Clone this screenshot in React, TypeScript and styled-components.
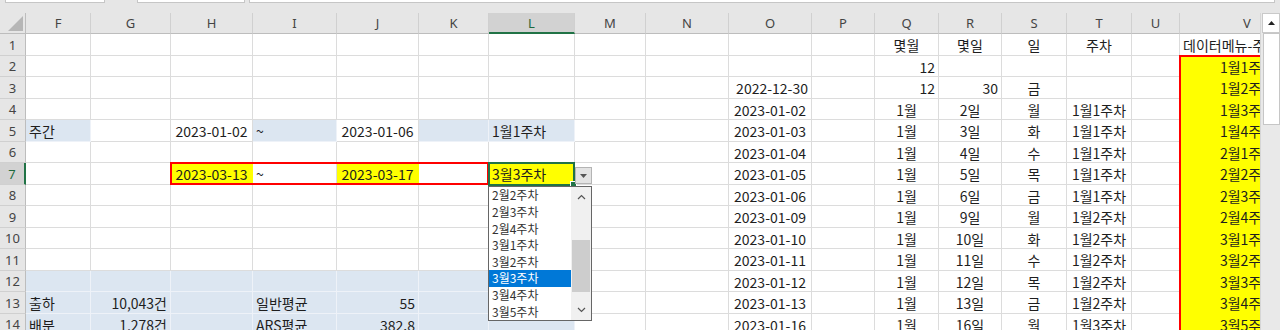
import React from 'react';
import styled, { createGlobalStyle } from 'styled-components';

type Fill = 'none' | 'blue' | 'yellow';
type Align = 'left' | 'center' | 'right';
interface CellDef { t?: string; a?: Align; f?: Fill }

const GlobalStyle = createGlobalStyle`
  html, body { margin: 0; padding: 0; background: #e6e6e6; overflow: hidden; }
  body { font-family: "Noto Sans CJK KR", "Noto Sans", sans-serif; }
`;

const COLS = ['F','G','H','I','J','K','L','M','N','O','P','Q','R','S','T','U','V'];
const WIDTHS = [65,80,82,84,82,70,86,71,83,83,63,64,63,65,65,48,135];
const ROW_H = [22,21,22,21,22,21,22,21,22,21,22,21,22,21];
const ACTIVE_COL = 'L';
const ACTIVE_ROW = 7;

const cells: Record<string, CellDef> = {
  F5: { t: '주간', f: 'blue' },
  H5: { t: '2023-01-02', a: 'center' },
  I5: { t: '~', f: 'blue' },
  J5: { t: '2023-01-06', a: 'center' },
  K5: { f: 'blue' },
  L5: { t: '1월1주차', f: 'blue' },
  H7: { t: '2023-03-13', a: 'center', f: 'yellow' },
  I7: { t: '~' },
  J7: { t: '2023-03-17', a: 'center', f: 'yellow' },
  L7: { t: '3월3주차', f: 'yellow' },
  F13: { t: '출하', f: 'blue' },
  G13: { t: '10,043건', a: 'right', f: 'blue' },
  I13: { t: '일반평균', f: 'blue' },
  J13: { t: '55', a: 'right', f: 'blue' },
  F14: { t: '배분', f: 'blue' },
  G14: { t: '1,278건', a: 'right', f: 'blue' },
  I14: { t: 'ARS평균', f: 'blue' },
  J14: { t: '382.8', a: 'right', f: 'blue' },
  Q1: { t: '몇월', a: 'center' },
  R1: { t: '몇일', a: 'center' },
  S1: { t: '일', a: 'center' },
  T1: { t: '주차', a: 'center' },
  V1: { t: '데이터메뉴-주차', a: 'left' },
  Q2: { t: '12', a: 'right' },
  O3: { t: '2022-12-30', a: 'right' },
  Q3: { t: '12', a: 'right' },
  R3: { t: '30', a: 'right' },
  S3: { t: '금', a: 'center' },
};

// blue band rows 12-14, F..L
for (let r = 12; r <= 14; r++) {
  ['F','G','H','I','J','K','L'].forEach((c) => {
    const k = `${c}${r}`;
    cells[k] = { ...(cells[k] || {}), f: 'blue' };
  });
}

const dayRows: [string, string, string, string][] = [
  ['2023-01-02', '2일', '월', '1월1주차'],
  ['2023-01-03', '3일', '화', '1월1주차'],
  ['2023-01-04', '4일', '수', '1월1주차'],
  ['2023-01-05', '5일', '목', '1월1주차'],
  ['2023-01-06', '6일', '금', '1월1주차'],
  ['2023-01-09', '9일', '월', '1월2주차'],
  ['2023-01-10', '10일', '화', '1월2주차'],
  ['2023-01-11', '11일', '수', '1월2주차'],
  ['2023-01-12', '12일', '목', '1월2주차'],
  ['2023-01-13', '13일', '금', '1월2주차'],
  ['2023-01-16', '16일', '월', '1월3주차'],
];
dayRows.forEach(([d, day, wd, wk], i) => {
  const r = i + 4;
  cells[`O${r}`] = { t: d, a: 'center' };
  cells[`Q${r}`] = { t: '1월', a: 'center' };
  cells[`R${r}`] = { t: day, a: 'center' };
  cells[`S${r}`] = { t: wd, a: 'center' };
  cells[`T${r}`] = { t: wk, a: 'center' };
});

const weekList = ['1월1주차','1월2주차','1월3주차','1월4주차','2월1주차','2월2주차','2월3주차','2월4주차','3월1주차','3월2주차','3월3주차','3월4주차','3월5주차'];
weekList.forEach((w, i) => {
  cells[`V${i + 2}`] = { t: w, a: 'center', f: 'yellow' };
});

const listItems = ['2월2주차','2월3주차','2월4주차','3월1주차','3월2주차','3월3주차','3월4주차','3월5주차'];
const SELECTED = '3월3주차';

const fillColor = (f?: Fill) => (f === 'blue' ? '#dce6f1' : f === 'yellow' ? '#ffff00' : '#ffffff');
const lineColor = (f?: Fill) => (f === 'blue' ? '#eef2f8' : f === 'yellow' ? '#ffff00' : '#dcdcdc');

const Page = styled.div`
  width: 1280px;
  height: 330px;
  display: flex;
  flex-direction: column;
  background: #e6e6e6;
  overflow: hidden;
`;

const TopStrip = styled.div`
  height: 13px;
  flex: none;
  display: flex;
  align-items: flex-start;
  padding-left: 5px;
  gap: 0;
`;

const FieldStub = styled.div<{ $w: number; $ml: number }>`
  width: ${(p) => p.$w}px;
  margin-left: ${(p) => p.$ml}px;
  height: 2px;
  background: #ffffff;
  border: 1px solid #c6c6c6;
  border-top: none;
`;

const Workspace = styled.div`
  flex: 1;
  display: flex;
  min-height: 0;
`;

const SheetViewport = styled.div`
  position: relative;
  width: 1260px;
  flex: none;
  overflow: hidden;
  background: #ffffff;
`;

const SheetGrid = styled.div`
  display: grid;
  grid-template-columns: 26px ${WIDTHS.map((w) => `${w}px`).join(' ')};
  grid-template-rows: 21px ${ROW_H.map((h) => `${h}px`).join(' ')};
  width: max-content;
`;

const Corner = styled.div`
  grid-row: 1;
  grid-column: 1;
  background: #e6e6e6;
  border-right: 1px solid #bdbdbd;
  border-bottom: 1px solid #bdbdbd;
  position: relative;
  &::after {
    content: '';
    position: absolute;
    right: 2px;
    bottom: 2px;
    width: 15px;
    height: 15px;
    background: #b6b6b6;
    clip-path: polygon(100% 0, 100% 100%, 0 100%);
  }
`;

const ColHead = styled.div<{ $c: number; $active: boolean }>`
  grid-row: 1;
  grid-column: ${(p) => p.$c};
  display: flex;
  align-items: center;
  justify-content: center;
  font-family: "Noto Sans", "Open Sans", sans-serif;
  font-size: 13px;
  color: ${(p) => (p.$active ? '#1d6a3e' : '#444444')};
  background: ${(p) => (p.$active ? '#d2d2d2' : '#e6e6e6')};
  border-right: 1px solid #d0d0d0;
  border-bottom: ${(p) => (p.$active ? '2px solid #217346' : '1px solid #bdbdbd')};
  padding-top: ${(p) => (p.$active ? '1px' : '0')};
`;

const RowHead = styled.div<{ $r: number; $active: boolean }>`
  grid-row: ${(p) => p.$r};
  grid-column: 1;
  display: flex;
  align-items: center;
  justify-content: center;
  font-family: "Noto Sans", "Open Sans", sans-serif;
  font-size: 13px;
  color: ${(p) => (p.$active ? '#1d6a3e' : '#444444')};
  background: ${(p) => (p.$active ? '#d2d2d2' : '#e6e6e6')};
  border-bottom: 1px solid #d0d0d0;
  border-right: ${(p) => (p.$active ? '2px solid #217346' : '1px solid #bdbdbd')};
`;

const Cell = styled.div<{ $r: number; $c: number; $fill?: Fill; $align?: Align }>`
  grid-row: ${(p) => p.$r};
  grid-column: ${(p) => p.$c};
  min-width: 0;
  display: flex;
  align-items: center;
  justify-content: ${(p) => (p.$align === 'right' ? 'flex-end' : p.$align === 'center' ? 'center' : 'flex-start')};
  padding: 1px 3px 0 3px;
  background: ${(p) => fillColor(p.$fill)};
  border-right: 1px solid ${(p) => lineColor(p.$fill)};
  border-bottom: 1px solid ${(p) => lineColor(p.$fill)};
  font-size: 14px;
  line-height: 1;
  color: #1e1e1e;
  white-space: nowrap;
`;

const RangeOutline = styled.div<{ $rows: string; $cols: string }>`
  grid-row: ${(p) => p.$rows};
  grid-column: ${(p) => p.$cols};
  border: 2px solid #ff0000;
  margin: -1px 0 0 -1px;
  pointer-events: none;
  z-index: 2;
`;

const ActiveCell = styled.div<{ $r: number; $c: number }>`
  grid-row: ${(p) => p.$r};
  grid-column: ${(p) => p.$c};
  border: 2px solid #217346;
  margin: -1px 0 -1px -1px;
  position: relative;
  z-index: 3;
  &::after {
    content: '';
    position: absolute;
    right: -4px;
    bottom: -4px;
    width: 5px;
    height: 5px;
    background: #217346;
    border: 1px solid #ffffff;
  }
`;

const DropButton = styled.div`
  position: absolute;
  left: 575px;
  top: 154px;
  width: 17px;
  height: 17px;
  box-sizing: border-box;
  background: #e3e3e3;
  border: 1px solid #b4b4b4;
  display: flex;
  align-items: center;
  justify-content: center;
  z-index: 4;
`;

const DropList = styled.div`
  position: absolute;
  left: 488px;
  top: 173px;
  width: 104px;
  height: 135px;
  box-sizing: border-box;
  border: 1px solid #666666;
  background: #ffffff;
  display: flex;
  z-index: 5;
`;

const ListItems = styled.div`
  flex: 1;
  display: flex;
  flex-direction: column;
`;

const ListItem = styled.div<{ $sel: boolean }>`
  height: 16.65px;
  display: flex;
  align-items: center;
  padding-left: 3px;
  font-size: 12px;
  line-height: 1;
  color: ${(p) => (p.$sel ? '#ffffff' : '#333333')};
  background: ${(p) => (p.$sel ? '#0078d7' : 'transparent')};
`;

const ListScroll = styled.div`
  width: 20px;
  flex: none;
  background: #f0f0f0;
  display: flex;
  flex-direction: column;
  align-items: center;
`;

const ListArrow = styled.div`
  height: 20px;
  width: 100%;
  flex: none;
  display: flex;
  align-items: center;
  justify-content: center;
`;

const ListTrack = styled.div`
  flex: 1;
  width: 100%;
  display: flex;
  flex-direction: column;
  align-items: center;
`;

const ListThumb = styled.div`
  margin-top: 33px;
  width: 18px;
  height: 52px;
  background: #cdcdcd;
`;

const VScroll = styled.div`
  width: 20px;
  flex: none;
  background: #e9e9e9;
  border-left: 1px solid #d6d6d6;
  box-sizing: border-box;
  display: flex;
  flex-direction: column;
  align-items: center;
  padding-left: 1px;
`;

const ScrollBtn = styled.div`
  width: 18px;
  height: 20px;
  box-sizing: border-box;
  background: #ffffff;
  border: 1px solid #c9c9c9;
  display: flex;
  align-items: center;
  justify-content: center;
`;

const ScrollThumb = styled.div`
  width: 17px;
  height: 92px;
  box-sizing: border-box;
  background: #ffffff;
  border: 1px solid #c6c6c6;
`;

const Chevron: React.FC<{ up?: boolean }> = ({ up }) => (
  <svg width="9" height="6" viewBox="0 0 9 6">
    <polyline
      points={up ? '1,5 4.5,1.5 8,5' : '1,1 4.5,4.5 8,1'}
      fill="none"
      stroke="#555"
      strokeWidth="1.2"
    />
  </svg>
);

const App: React.FC = () => {
  const rows = ROW_H.map((_, i) => i + 1);
  return (
    <>
      <GlobalStyle />
      <Page>
        <TopStrip>
          <FieldStub $w={98} $ml={0} />
          <FieldStub $w={106} $ml={32} />
          <FieldStub $w={1024} $ml={4} />
        </TopStrip>
        <Workspace>
          <SheetViewport>
            <SheetGrid>
              <Corner />
              {COLS.map((c, i) => (
                <ColHead key={c} $c={i + 2} $active={c === ACTIVE_COL}>{c}</ColHead>
              ))}
              {rows.map((r) => (
                <React.Fragment key={r}>
                  <RowHead $r={r + 1} $active={r === ACTIVE_ROW}>{r}</RowHead>
                  {COLS.map((c, i) => {
                    const def = cells[`${c}${r}`] || {};
                    return (
                      <Cell key={c} $r={r + 1} $c={i + 2} $fill={def.f} $align={def.a}>
                        {def.t}
                      </Cell>
                    );
                  })}
                </React.Fragment>
              ))}
              <RangeOutline $rows="8" $cols="4 / 8" />
              <RangeOutline $rows="3 / 16" $cols="18" />
              <ActiveCell $r={8} $c={8} />
            </SheetGrid>
            <DropButton>
              <svg width="7" height="4" viewBox="0 0 7 4">
                <polygon points="0,0 7,0 3.5,4" fill="#555" />
              </svg>
            </DropButton>
            <DropList>
              <ListItems>
                {listItems.map((it) => (
                  <ListItem key={it} $sel={it === SELECTED}>{it}</ListItem>
                ))}
              </ListItems>
              <ListScroll>
                <ListArrow><Chevron up /></ListArrow>
                <ListTrack><ListThumb /></ListTrack>
                <ListArrow><Chevron /></ListArrow>
              </ListScroll>
            </DropList>
          </SheetViewport>
          <VScroll>
            <ScrollBtn>
              <svg width="7" height="4" viewBox="0 0 7 4">
                <polygon points="3.5,0 7,4 0,4" fill="#222" />
              </svg>
            </ScrollBtn>
            <ScrollThumb />
          </VScroll>
        </Workspace>
      </Page>
    </>
  );
};

export default App;
